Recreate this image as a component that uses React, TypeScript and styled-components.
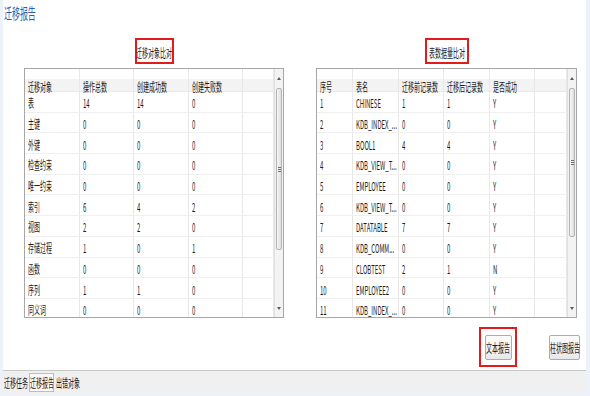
import React from "react";
import styled, { createGlobalStyle, css } from "styled-components";

const GlobalStyle = createGlobalStyle`
  html, body {
    margin: 0;
    padding: 0;
  }
  body {
    font-family: "Noto Sans CJK SC", "Noto Sans", sans-serif;
    font-size: 12px;
    color: #1c1c1c;
    background: #fff;
  }
`;

// the whole screen is horizontally narrow, so text is squeezed
const squeeze = css`
  display: inline-block;
  white-space: nowrap;
  transform: scaleX(0.5);
`;

const Page = styled.div`
  width: 590px;
  height: 396px;
  box-sizing: border-box;
  padding: 0 4px 3px 3px;
  background: #edf2fa;
  display: flex;
  flex-direction: column;
`;

const Sheet = styled.div`
  height: 370px;
  background: #fff;
  border-bottom: 1px solid #c6c6c6;
  display: flex;
  flex-direction: column;
`;

const Title = styled.div`
  height: 22px;
  padding: 4px 0 0 1px;
  box-sizing: border-box;
  font-size: 15px;
  line-height: 17px;
  color: #2b5ca6;
  span {
    ${squeeze};
    transform: scaleX(0.53);
    transform-origin: left center;
  }
`;

const Panels = styled.div`
  display: flex;
  gap: 32px;
  margin-top: 16px;
  padding-left: 21px;
`;

const Panel = styled.div<{ $w: number }>`
  width: ${(p) => p.$w}px;
  display: flex;
  flex-direction: column;
  align-items: center;
`;

const RedBox = styled.div<{ $w: number; $h: number }>`
  width: ${(p) => p.$w}px;
  height: ${(p) => p.$h}px;
  box-sizing: border-box;
  border: 2px solid #e41b1b;
  display: flex;
  align-items: center;
  justify-content: center;
`;

const Caption = styled.span`
  ${squeeze};
  padding-top: 2px;
`;

const Grid = styled.div`
  width: 100%;
  height: 250px;
  margin-top: 4px;
  box-sizing: border-box;
  border: 1px solid #a7a7a7;
  display: flex;
  overflow: hidden;
`;

const GridBody = styled.div`
  flex: 1;
  overflow: hidden;
`;

const HeadRow = styled.div<{ $cols: string }>`
  display: grid;
  grid-template-columns: ${(p) => p.$cols};
  height: 23px;
  background: linear-gradient(to bottom, #fff 0, #fff 45%, #f3f3f3 45%, #f3f3f3 100%);
  border-bottom: 1px solid #e9e9e9;
  box-sizing: border-box;
`;

const Row = styled.div<{ $cols: string }>`
  display: grid;
  grid-template-columns: ${(p) => p.$cols};
  height: 20.7px;
  border-bottom: 1px solid #efefef;
  box-sizing: border-box;
`;

const Cell = styled.div<{ $head?: boolean }>`
  min-width: 0;
  border-right: 1px solid #e8e8e8;
  padding: ${(p) => (p.$head ? "9px 0 0 3px" : "2px 0 0 3px")};
  box-sizing: border-box;
  display: flex;
  align-items: center;
  span {
    ${squeeze};
    transform-origin: left center;
  }
`;

const Scroll = styled.div`
  width: 8px;
  background: #f3f3f3;
  border-left: 1px solid #e0e0e0;
  display: flex;
  flex-direction: column;
  align-items: center;
`;

const ScrollBtn = styled.div<{ $h: number }>`
  height: ${(p) => p.$h}px;
  width: 100%;
  display: flex;
  align-items: center;
  justify-content: center;
`;

const Arrow = styled.div<{ $down?: boolean }>`
  width: 0;
  height: 0;
  border-left: 2px solid transparent;
  border-right: 2px solid transparent;
  ${(p) => (p.$down ? "border-top: 3px solid #5a5a5a;" : "border-bottom: 3px solid #5a5a5a;")}
`;

const Track = styled.div`
  flex: 1;
  width: 100%;
`;

const Thumb = styled.div<{ $h: number }>`
  height: ${(p) => p.$h}px;
  margin: 0 1px;
  box-sizing: border-box;
  border: 1px solid #b3b3b3;
  border-radius: 2px;
  background: linear-gradient(to right, #f7f7f7, #dedede);
  display: flex;
  align-items: center;
  justify-content: center;
`;

const Grip = styled.div`
  width: 3px;
  height: 5px;
  background: repeating-linear-gradient(to bottom, #707070 0, #707070 1px, transparent 1px, transparent 2px);
`;

const Actions = styled.div`
  display: flex;
  justify-content: flex-end;
  align-items: center;
  gap: 32px;
  margin-top: 9px;
  padding-right: 6px;
`;

const Button = styled.button<{ $w: number }>`
  width: ${(p) => p.$w}px;
  height: 25px;
  padding: 0;
  border: 1px solid #acacac;
  border-radius: 2px;
  background: linear-gradient(to bottom, #fdfdfd, #e8e8e8);
  font-family: inherit;
  font-size: 12px;
  color: #1c1c1c;
  display: flex;
  align-items: center;
  justify-content: center;
  overflow: visible;
  span {
    ${squeeze};
  }
`;

const TabBar = styled.div`
  height: 22px;
  background: #f0f0f0;
  display: flex;
  align-items: flex-start;
`;

const Tab = styled.div<{ $w: number; $active?: boolean }>`
  width: ${(p) => p.$w}px;
  height: 19px;
  margin-top: 2px;
  box-sizing: border-box;
  display: flex;
  align-items: center;
  justify-content: center;
  border: 1px solid ${(p) => (p.$active ? "#bdbdbd" : "transparent")};
  background: ${(p) => (p.$active ? "#fafafa" : "transparent")};
  span {
    ${squeeze};
  }
`;

const leftCols = "55px 54px 55px 54px 1fr";
const rightCols = "36px 46px 45px 46px 45px 1fr";

const objectRows = [
  ["表", "14", "14", "0"],
  ["主键", "0", "0", "0"],
  ["外键", "0", "0", "0"],
  ["检查约束", "0", "0", "0"],
  ["唯一约束", "0", "0", "0"],
  ["索引", "6", "4", "2"],
  ["视图", "2", "2", "0"],
  ["存储过程", "1", "0", "1"],
  ["函数", "0", "0", "0"],
  ["序列", "1", "1", "0"],
  ["同义词", "0", "0", "0"],
];

const tableRows = [
  ["1", "CHINESE", "1", "1", "Y"],
  ["2", "KDB_INDEX_...", "0", "0", "Y"],
  ["3", "BOOL1", "4", "4", "Y"],
  ["4", "KDB_VIEW_T...", "0", "0", "Y"],
  ["5", "EMPLOYEE", "0", "0", "Y"],
  ["6", "KDB_VIEW_T...", "0", "0", "Y"],
  ["7", "DATATABLE", "7", "7", "Y"],
  ["8", "KDB_COMM...", "0", "0", "Y"],
  ["9", "CLOBTEST", "2", "1", "N"],
  ["10", "EMPLOYEE2", "0", "0", "Y"],
  ["11", "KDB_INDEX_...", "0", "0", "Y"],
];

function DataGrid({ cols, head, rows, thumb }: { cols: string; head: string[]; rows: string[][]; thumb: number }) {
  return (
    <Grid>
      <GridBody>
        <HeadRow $cols={cols}>
          {head.map((h) => (
            <Cell $head key={h}>
              <span>{h}</span>
            </Cell>
          ))}
          <Cell $head />
        </HeadRow>
        {rows.map((r, i) => (
          <Row $cols={cols} key={i}>
            {r.map((v, j) => (
              <Cell key={j}>
                <span>{v}</span>
              </Cell>
            ))}
            <Cell />
          </Row>
        ))}
      </GridBody>
      <Scroll>
        <ScrollBtn $h={19}>
          <Arrow />
        </ScrollBtn>
        <Track>
          <Thumb $h={thumb}>
            <Grip />
          </Thumb>
        </Track>
        <ScrollBtn $h={17}>
          <Arrow $down />
        </ScrollBtn>
      </Scroll>
    </Grid>
  );
}

export default function App() {
  return (
    <>
      <GlobalStyle />
      <Page>
        <Sheet>
          <Title>
            <span>迁移报告</span>
          </Title>
          <Panels>
            <Panel $w={260}>
              <RedBox $w={39} $h={26}>
                <Caption>迁移对象比对</Caption>
              </RedBox>
              <DataGrid
                cols={leftCols}
                head={["迁移对象", "操作总数", "创建成功数", "创建失败数"]}
                rows={objectRows}
                thumb={162}
              />
            </Panel>
            <Panel $w={261}>
              <RedBox $w={44} $h={26}>
                <Caption>表数据量比对</Caption>
              </RedBox>
              <DataGrid
                cols={rightCols}
                head={["序号", "表名", "迁移前记录数", "迁移后记录数", "是否成功"]}
                rows={tableRows}
                thumb={149}
              />
            </Panel>
          </Panels>
          <Actions>
            <RedBox $w={38} $h={40}>
              <Button $w={27}>
                <span>文本报告</span>
              </Button>
            </RedBox>
            <Button $w={31}>
              <span>柱状图报告</span>
            </Button>
          </Actions>
        </Sheet>
        <TabBar>
          <Tab $w={26}>
            <span>迁移任务</span>
          </Tab>
          <Tab $w={25} $active>
            <span>迁移报告</span>
          </Tab>
          <Tab $w={27}>
            <span>出错对象</span>
          </Tab>
        </TabBar>
      </Page>
    </>
  );
}
